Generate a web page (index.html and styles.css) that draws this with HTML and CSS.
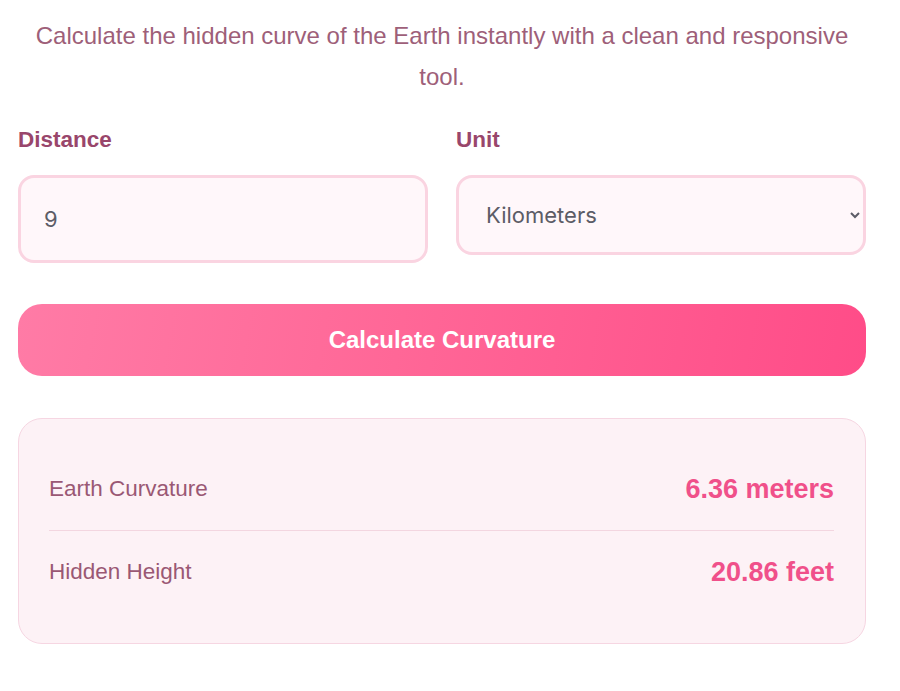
FILE: index.html
```html
<!DOCTYPE html>
<html lang="en">
<head>
    <meta charset="UTF-8">
    <meta name="viewport" content="width=device-width, initial-scale=1.0">
    <title>Earth Curvature Calculator</title>
    <link rel="stylesheet" href="styles.css">
</head>
<body>
    <div class="calculator">
        <p class="intro">Calculate the hidden curve of the Earth instantly with a clean and responsive tool.</p>

        <div class="fields">
            <div class="field">
                <label for="distance">Distance</label>
                <input type="number" id="distance" class="distance-input" value="9">
            </div>
            <div class="field">
                <label for="unit">Unit</label>
                <select id="unit" class="unit-select">
                    <option value="km" selected>Kilometers</option>
                    <option value="mi">Miles</option>
                </select>
            </div>
        </div>

        <button class="calc-button" onclick="calculate()">Calculate Curvature</button>

        <div class="results">
            <div class="result-row">
                <span class="result-label">Earth Curvature</span>
                <span class="result-value" id="curvature">6.36 meters</span>
            </div>
            <div class="result-row">
                <span class="result-label">Hidden Height</span>
                <span class="result-value" id="hidden">20.86 feet</span>
            </div>
        </div>
    </div>

    <script>
function calculate() {
    let d = parseFloat(document.getElementById('distance').value) || 0;
    if (document.getElementById('unit').value === 'mi') {
        d = d * 1.609344;
    }
    const meters = (d * d) / (2 * 6371) * 1000;
    document.getElementById('curvature').textContent = meters.toFixed(2) + ' meters';
    document.getElementById('hidden').textContent = (meters * 3.28084).toFixed(2) + ' feet';
}
    </script>
</body>
</html>
```

FILE: styles.css
```css
body {
    font-family: "Liberation Sans", Arial, sans-serif;
    margin: 0;
    padding: 0;
    background-color: #ffffff;
}

.calculator {
    width: 848px;
    margin-left: 18px;
    padding-top: 15px;
}

.intro {
    margin: 0;
    font-size: 24px;
    line-height: 41px;
    text-align: center;
    color: #9e5f79;
}

.fields {
    display: grid;
    grid-template-columns: 1fr 1fr;
    gap: 28px;
    margin-top: 30px;
    align-items: start;
}

.field label {
    display: block;
    font-size: 22.5px;
    font-weight: bold;
    line-height: 26px;
    color: #99466b;
    margin-bottom: 22px;
}

.distance-input,
.unit-select {
    box-sizing: border-box;
    width: 100%;
    border: 3px solid #fad4e1;
    border-radius: 16px;
    background-color: #fff7fa;
    font-family: Inter, "Noto Sans", sans-serif;
    font-size: 22px;
    color: #5c5c66;
    outline: none;
}

.distance-input {
    height: 88px;
    padding: 0 23px;
}

.unit-select {
    height: 80px;
    padding: 0 14px 0 23px;
}

.calc-button {
    display: block;
    width: 100%;
    height: 72px;
    margin-top: 41px;
    border: none;
    border-radius: 24px;
    background: linear-gradient(100deg, #ff7ba6 0%, #ff6797 45%, #ff4c88 100%);
    color: #ffffff;
    font-family: "Liberation Sans", Arial, sans-serif;
    font-size: 24px;
    font-weight: bold;
    cursor: pointer;
}

.results {
    margin-top: 42px;
    padding: 29px 31px 30px 30px;
    background-color: #fdf2f6;
    border: 1px solid #f6d6e2;
    border-radius: 24px;
}

.result-row {
    display: flex;
    justify-content: space-between;
    align-items: center;
    height: 82px;
}

.result-row + .result-row {
    border-top: 1px solid #f3d6e0;
}

.result-label {
    font-size: 22.5px;
    color: #9a5874;
}

.result-value {
    font-size: 27px;
    font-weight: bold;
    color: #f0508a;
}
```
